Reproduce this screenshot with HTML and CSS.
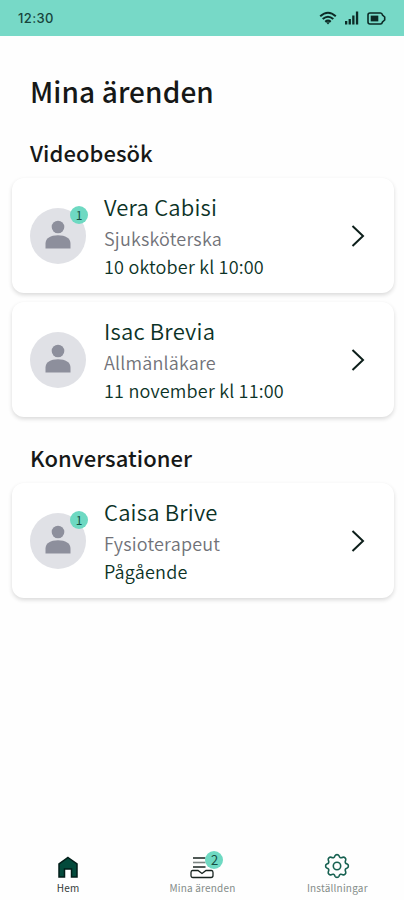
FILE: index.html
```html
<!DOCTYPE html>
<html lang="sv">
<head>
<meta charset="utf-8">
<title>Mina ärenden</title>
<link rel="stylesheet" href="styles.css">
</head>
<body>
<svg width="0" height="0" class="defs">
  <symbol id="person" viewBox="0 0 26 30"><circle cx="13" cy="7" r="6.300"/><path d="M.5 28.500v-4.700C.5 18 5.500 15.200 13 15.200S25.500 18 25.500 23.800v4.700z"/></symbol>
  <symbol id="chevron" viewBox="0 0 14 22"><path d="M1.500 1L12 11 1.500 21" fill="none" stroke="#0d1f1b" stroke-width="2"/></symbol>
</svg>
<header class="status">
  <span class="time">12:30</span>
  <div class="indicators">
    <svg width="18" height="14" viewBox="0 0 18 14" fill="none" stroke="#0c2b26" stroke-width="2"><path d="M1.200 5.200Q9-1.800 16.800 5.200M3.700 8.100Q9 3.500 14.300 8.100M6.200 10.700Q9 8.500 11.800 10.700"/><path d="M7 11.200h4l-2 2.300z" fill="#0c2b26" stroke="none"/></svg>
    <svg width="14" height="14" viewBox="0 0 14 14" fill="#0c2b26"><path d="M0 10h2.300v3.500H0zM3.600 8h2.300v5.500H3.600zM7.200 4.500h2.300v9H7.200zM10.900 .5h2.300v13h-2.300z"/></svg>
    <svg width="19" height="13" viewBox="0 0 19 13"><path d="M3 1h10.500Q15 1 15.500 3L17.700 5v3L15.500 10Q15 12 13.500 12H3Q1 12 1 10V3Q1 1 3 1z" fill="none" stroke="#0c2b26" stroke-width="1.600"/><path d="M3.700 3.600h7.600v5.800H3.700z" fill="#0c2b26"/></svg>
  </div>
</header>
<main>
  <h1>Mina ärenden</h1>
  <h2>Videobesök</h2>
  <article class="card">
    <div class="avatar"><svg width="26" height="30"><use href="#person"/></svg><span class="badge">1</span></div>
    <div class="info"><h3>Vera Cabisi</h3><p class="role">Sjuksköterska</p><p>10 oktober kl 10:00</p></div>
    <svg class="chevron" width="14" height="22"><use href="#chevron"/></svg>
  </article>
  <article class="card">
    <div class="avatar"><svg width="26" height="30"><use href="#person"/></svg></div>
    <div class="info"><h3>Isac Brevia</h3><p class="role">Allmänläkare</p><p>11 november kl 11:00</p></div>
    <svg class="chevron" width="14" height="22"><use href="#chevron"/></svg>
  </article>
  <h2>Konversationer</h2>
  <article class="card">
    <div class="avatar"><svg width="26" height="30"><use href="#person"/></svg><span class="badge">1</span></div>
    <div class="info"><h3>Caisa Brive</h3><p class="role">Fysioterapeut</p><p>Pågående</p></div>
    <svg class="chevron" width="14" height="22"><use href="#chevron"/></svg>
  </article>
</main>
<nav>
  <a class="active"><svg width="22" height="22" viewBox="0 0 22 22"><path d="M11 1.500L20 8v13h-5.500v-8h-7v8H2V8z" fill="#034a3b" stroke="#021d18" stroke-width="1.500"/></svg><span>Hem</span></a>
  <a><span class="cases"><svg width="24" height="24" viewBox="0 0 24 24" fill="none" stroke="#17231f" stroke-width="1.600"><path d="M3 3h12.500M3 12h12.500"/><path d="M3 7.500h12.500" stroke="#7d8583"/><path d="M2.500 15.500H8l4 3 4-3h5.500q1.500 0 1.500 2v3q0 2-2 2H3q-2 0-2-2v-3q0-2 1.500-2z" stroke-width="1.300"/></svg><b>2</b></span><span>Mina ärenden</span></a>
  <a class="settings"><svg width="26" height="26" viewBox="-13 -13 26 26" fill="none" stroke="#176151" stroke-width="1.600" stroke-linejoin="round"><path d="M-3.400-8.300Q-2.400-8.700-2-10.200Q-1.500-11.400 0-11.400T2-10.200Q2.400-8.700 3.400-8.300Q4.500-8 5.800-8.700Q7-9.200 8.100-8.100T8.700-5.800Q8-4.500 8.300-3.400Q8.700-2.400 10.200-2Q11.400-1.500 11.400 0T10.200 2Q8.700 2.400 8.300 3.400Q8 4.500 8.700 5.800Q9.200 7 8.100 8.100T5.800 8.700Q4.500 8 3.400 8.300Q2.400 8.700 2 10.200Q1.500 11.400 0 11.400T-2 10.200Q-2.400 8.700-3.400 8.300Q-4.500 8-5.800 8.700Q-7 9.200-8.100 8.100T-8.700 5.800Q-8 4.500-8.300 3.400Q-8.700 2.400-10.200 2Q-11.400 1.500-11.400 0T-10.200-2Q-8.700-2.400-8.300-3.400Q-8-4.500-8.700-5.800Q-9.200-7-8.100-8.100T-5.800-8.700Q-4.500-8-3.400-8.300z"/><circle r="3.700"/></svg><span>Inställningar</span></a>
</nav>
</body>
</html>
```
FILE: styles.css
```css
* { box-sizing: border-box; }
body {
  margin: 0;
  height: 900px;
  display: flex;
  flex-direction: column;
  background: #fefefe;
  color: #161817;
  font-family: "Noto Sans CJK SC", "Noto Sans", sans-serif;
}
.defs { position: absolute; }
h1, h2, h3, p { margin: 0; font-weight: 400; white-space: nowrap; }
.status {
  height: 36px;
  padding: 0 18px;
  display: flex;
  align-items: center;
  justify-content: space-between;
  background: #77d9c7;
}
.time { font: 500 13px/18px Inter, sans-serif; color: #17443c; letter-spacing: .4px; }
.indicators { display: flex; align-items: center; gap: 8px; }
main { flex: 1; padding: 0 10px 0 12px; }
h1 { margin: 35px 18px 0; font-size: 28px; line-height: 40px; font-weight: 500; letter-spacing: .1px; }
h2 { margin: 25px 18px 10px; font-size: 22px; line-height: 32px; font-weight: 500; letter-spacing: .05px; }
.card + h2 { margin-top: 24px; }
.card {
  height: 115px;
  padding: 0 29px 0 18px;
  display: flex;
  align-items: center;
  background: #fff;
  border-radius: 12px;
  box-shadow: 0 2px 4px rgba(0, 0, 0, .15);
}
.card + .card { margin-top: 9px; }
.avatar {
  position: relative;
  width: 56px;
  height: 56px;
  display: flex;
  align-items: center;
  justify-content: center;
  border-radius: 50%;
  background: #e0e1e6;
  fill: #8d8f9c;
}
.avatar svg { margin-bottom: 2px; }
.badge {
  position: absolute;
  top: -2px;
  right: -2px;
  width: 18px;
  height: 18px;
  border-radius: 50%;
  background: #6ed9c2;
  color: #164f43;
  font-size: 12px;
  line-height: 17px;
  text-align: center;
}
.info { flex: 1; margin-left: 18px; color: #0b3226; font-weight: 350; }
.info h3, .info p { font-weight: inherit; }
.info h3 { margin-top: -2px; margin-bottom: 2px; font-size: 22px; line-height: 32px; letter-spacing: .2px; }
.info p { font-size: 18px; line-height: 28px; letter-spacing: .2px; }
.info .role { color: #717278; }
nav { height: 60px; display: grid; grid-template-columns: 1fr 1fr 1fr; padding: 0 0 5px 1px; }
nav a { display: flex; flex-direction: column; align-items: center; justify-content: flex-end; font-size: 10px; line-height: 14px; letter-spacing: .2px; color: #848c89; }
nav a > svg { margin-bottom: 3px; }
nav .active { color: #333c39; }
nav .settings { padding-left: 1px; }
nav .settings svg { margin-bottom: 2px; }
.cases { position: relative; display: flex; margin-bottom: 2px; }
.cases b { position: absolute; left: 15px; top: -4px; width: 18px; height: 18px; border-radius: 50%; background: #6ed9c2; color: #164f43; font: 400 13px/18px "Noto Sans CJK SC", sans-serif; text-align: center; letter-spacing: 0; }
```
